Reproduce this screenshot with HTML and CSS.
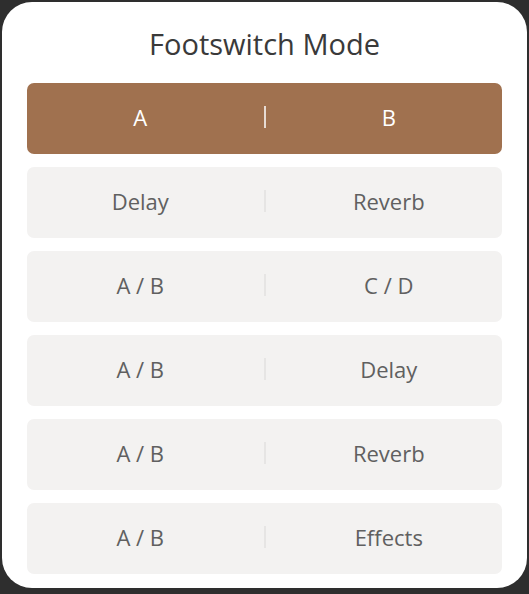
FILE: index.html
```html
<!DOCTYPE html>
<html lang="en">
<head>
<meta charset="utf-8">
<title>Footswitch Mode</title>
<link rel="stylesheet" href="styles.css">
</head>
<body>
  <div class="sheet">
    <h1 class="sheet-title">Footswitch Mode</h1>
    <ul class="modes">
      <li class="mode is-active"><span class="mode-a">A</span><span class="mode-sep"></span><span class="mode-b">B</span></li>
      <li class="mode"><span class="mode-a">Delay</span><span class="mode-sep"></span><span class="mode-b">Reverb</span></li>
      <li class="mode"><span class="mode-a">A / B</span><span class="mode-sep"></span><span class="mode-b">C / D</span></li>
      <li class="mode"><span class="mode-a">A / B</span><span class="mode-sep"></span><span class="mode-b">Delay</span></li>
      <li class="mode"><span class="mode-a">A / B</span><span class="mode-sep"></span><span class="mode-b">Reverb</span></li>
      <li class="mode"><span class="mode-a">A / B</span><span class="mode-sep"></span><span class="mode-b">Effects</span></li>
    </ul>
  </div>
</body>
</html>
```
FILE: styles.css
```css
* {
  box-sizing: border-box;
}

html, body {
  margin: 0;
  height: 100%;
}

body {
  background: #2e2e2e;
  font-family: "Open Sans", "Noto Sans", sans-serif;
  padding: 2px 2px 6px 2px;
}

.sheet {
  background: #ffffff;
  border-radius: 30px;
  height: 586px;
  width: 525px;
  padding: 0 25px;
  display: flex;
  flex-direction: column;
}

.sheet-title {
  margin: 0;
  height: 81px;
  display: flex;
  align-items: center;
  justify-content: center;
  font-size: 29px;
  font-weight: 400;
  color: #3a3a3a;
  padding-top: 1px;
}

.modes {
  list-style: none;
  margin: 0;
  padding: 0;
  display: flex;
  flex-direction: column;
  gap: 13px;
}

.mode {
  height: 71px;
  border-radius: 7px;
  background: #f3f2f1;
  display: grid;
  grid-template-columns: 1fr auto 1fr;
  column-gap: 10px;
  align-items: center;
  padding-bottom: 3px;
  font-size: 22px;
  font-weight: 400;
  color: #606060;
}

.mode-a,
.mode-b {
  text-align: center;
}

.mode-sep {
  width: 2px;
  height: 22px;
  background: #e6e5e4;
}

.mode.is-active {
  background: #a0714f;
  color: #ffffff;
}

.mode.is-active .mode-sep {
  background: rgba(255, 255, 255, 0.75);
}
```
